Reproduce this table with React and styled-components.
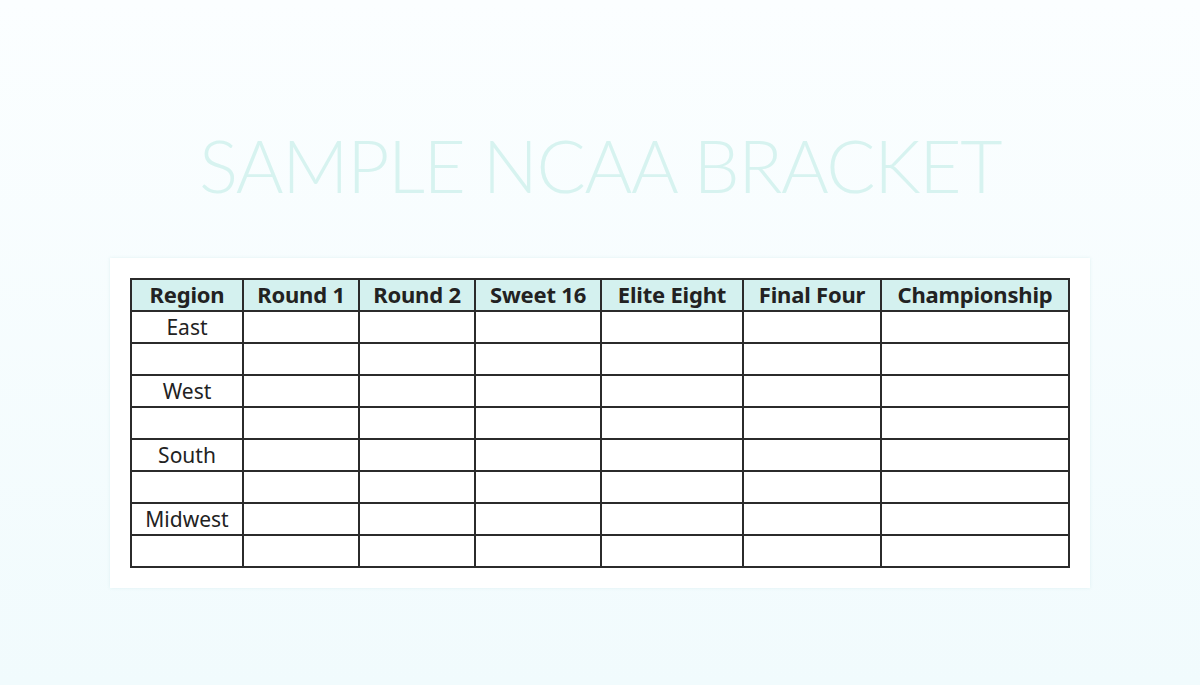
import React from "react";
import styled, { createGlobalStyle } from "styled-components";

const GlobalStyle = createGlobalStyle`
  html, body {
    margin: 0;
    padding: 0;
  }
  body {
    font-family: "Noto Sans", "Liberation Sans", sans-serif;
  }
`;

const Page = styled.div`
  width: 1200px;
  height: 685px;
  background: linear-gradient(180deg, #fbfeff 0%, #f1fbfd 100%);
  display: flex;
  flex-direction: column;
  align-items: center;
  overflow: hidden;
`;

const Title = styled.h1`
  margin: 121px 0 0;
  font-family: "Lato", "Noto Sans", sans-serif;
  font-weight: 300;
  font-size: 73px;
  line-height: 88px;
  letter-spacing: -1.4px;
  color: #d7f3f0;
  white-space: nowrap;
`;

const Card = styled.div`
  margin: 49px 0 0;
  width: 940px;
  padding: 20px;
  background: #ffffff;
  box-shadow: 0 0 3px rgba(220, 240, 242, 0.9);
`;

const Table = styled.table`
  border-collapse: collapse;
  width: 938px;
  table-layout: fixed;
  color: #222;
`;

const HeadCell = styled.th`
  background: #d4f1ef;
  border: 2px solid #2b2b2b;
  height: 27px;
  padding: 0 0 3px;
  font-size: 22px;
  line-height: 26px;
  font-weight: 700;
  letter-spacing: -0.2px;
  text-align: center;
  white-space: nowrap;
`;

const Cell = styled.td`
  border: 2px solid #2b2b2b;
  height: 29px;
  padding: 0 0 1px;
  font-size: 21px;
  line-height: 26px;
  text-align: center;
  white-space: nowrap;
`;

const columns = [
  { label: "Region", width: 112 },
  { label: "Round 1", width: 116 },
  { label: "Round 2", width: 116 },
  { label: "Sweet 16", width: 126 },
  { label: "Elite Eight", width: 142 },
  { label: "Final Four", width: 138 },
  { label: "Championship", width: 188 },
];

const rows = ["East", "", "West", "", "South", "", "Midwest", ""];

export default function App() {
  return (
    <>
      <GlobalStyle />
      <Page>
        <Title>SAMPLE NCAA BRACKET</Title>
        <Card>
          <Table>
            <colgroup>
              {columns.map((c) => (
                <col key={c.label} style={{ width: c.width }} />
              ))}
            </colgroup>
            <thead>
              <tr>
                {columns.map((c) => (
                  <HeadCell key={c.label}>{c.label}</HeadCell>
                ))}
              </tr>
            </thead>
            <tbody>
              {rows.map((r, i) => (
                <tr key={i}>
                  <Cell>{r}</Cell>
                  {columns.slice(1).map((c) => (
                    <Cell key={c.label} />
                  ))}
                </tr>
              ))}
            </tbody>
          </Table>
        </Card>
      </Page>
    </>
  );
}
